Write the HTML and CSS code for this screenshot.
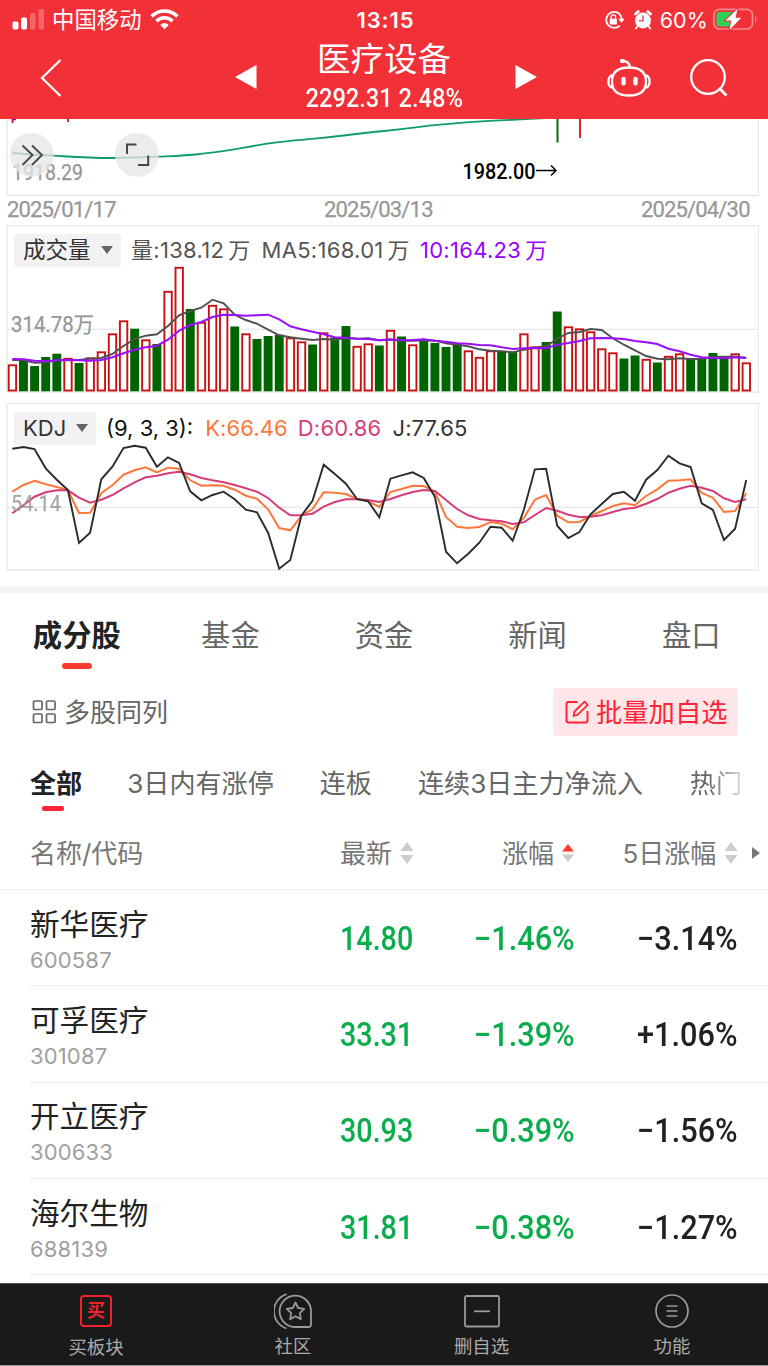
FILE: index.html
```html
<!DOCTYPE html>
<html lang="zh-CN">
<head>
<meta charset="utf-8">
<title>医疗设备</title>
<link rel="stylesheet" href="styles.css">
</head>
<body>
<div class="app">
  <header class="header">
    <div class="status">
      <div class="status-left">
        <svg width="34" height="22" viewBox="0 0 34 22" fill="#fff"><rect x="0.5" y="12.500" width="6" height="8" rx="1.8"/><rect x="9" y="8.500" width="6" height="12" rx="1.8"/><g opacity=".25"><rect x="18" y="4" width="5.5" height="16.500" rx="1.6"/><rect x="26.500" y="0" width="5.500" height="20.500" rx="1.600"/></g></svg>
        <span class="carrier">中国移动</span>
        <svg width="29" height="22" viewBox="0 0 29 22" fill="none" stroke="#fff" stroke-width="3.6"><path d="M1.700 7.400C8.800 .2 20.200 .2 27.300 7.400"/><path d="M6.400 12.100C10.900 7.700 18.100 7.700 22.600 12.100"/><path d="M14.500 20.200L10.200 15.900Q14.500 12.300 18.800 15.900Z" fill="#fff" stroke="none"/></svg>
      </div>
      <div class="clock">13:15</div>
      <div class="status-right">
        <svg class="i-lock" width="20" height="20" viewBox="0 0 20 20"><path d="M15.400 3.800A8 8 0 1 0 15.800 15.600M15.400 3.800Q17.500 6 17.600 9" fill="none" stroke="#fff" stroke-width="1.800"/><path d="M14.400 8.800H20.800L17.400 12.800Z" fill="#fff"/><rect x="5.700" y="8.700" width="7.200" height="5.800" rx="1" fill="#fff"/><path d="M7 9V7.200a2.300 2.300 0 0 1 4.600 0V9" fill="none" stroke="#fff" stroke-width="1.300"/></svg>
        <svg class="i-alarm" width="18" height="20" viewBox="0 0 18 20"><circle cx="9" cy="10.500" r="7.900" fill="#fff"/><path d="M1.500 4L4.300 1.500M16.500 4L13.700 1.500" stroke="#fff" stroke-width="2.800" stroke-linecap="round"/><path d="M3.400 16.200L1.800 18.500M14.600 16.200L16.200 18.500" stroke="#fff" stroke-width="1.800" stroke-linecap="round"/><path d="M9 5.500V10.800H4.800" fill="none" stroke="#f23037" stroke-width="1.300"/></svg>
        <span class="battery-text">60%</span>
        <svg width="46" height="24" viewBox="0 0 46 24"><rect x="1" y="1.400" width="38.500" height="19.600" rx="5.500" fill="none" stroke="#fff" stroke-opacity=".42" stroke-width="1.700"/><path d="M42 7.700Q45 11.200 42 14.700Z" fill="#fff" opacity=".45"/><rect x="3.500" y="3.900" width="18" height="14.600" rx="3" fill="#30d158"/><path d="M24.500 .7L12.500 12.400H18.200L16.600 21.700L28.300 9.700H22.600Z" fill="#fff" stroke="#f23037" stroke-width="2" paint-order="stroke"/></svg>
      </div>
    </div>
    <div class="nav">
      <div class="nav-back"><svg width="22" height="38" viewBox="0 0 22 38" fill="none" stroke="#fff" stroke-width="2.200"><path d="M20.500 1L2 19L20.500 37"/></svg></div>
      <svg class="nav-arrow" width="22" height="24" viewBox="0 0 22 24" fill="#fff"><path d="M0 12L21.500 0V24Z"/></svg>
      <div class="nav-title">
        <div class="nav-name">医疗设备</div>
        <div class="nav-quote"><span class="din">2292.31 2.48%</span></div>
      </div>
      <svg class="nav-arrow" width="22" height="24" viewBox="0 0 22 24" fill="#fff"><path d="M22 12L0.500 0V24Z"/></svg>
      <div class="nav-actions">
        <svg width="44" height="40" viewBox="0 0 44 40" fill="none" stroke="#fff" stroke-width="2.300"><path d="M22 8.500C34 8.500 39 13.500 39 22.500S34 36.500 22 36.500S5 31.500 5 22.500S10 8.500 22 8.500Z"/><path d="M4.500 16.500Q1.400 18 1.400 22.500T4.500 28.500M39.500 16.500Q42.600 18 42.600 22.500T39.500 28.500M22.500 8.500Q23 3 17 2" stroke-linecap="round"/><circle cx="15.300" cy="1.900" r="2.300" fill="#fff" stroke="none"/><path d="M16.500 20V24.200M28.500 20V24.200" stroke-width="4.400" stroke-linecap="round"/></svg>
        <svg width="38" height="38" viewBox="0 0 38 38" fill="none" stroke="#fff" stroke-width="2.300"><circle cx="18" cy="18" r="16.800"/><path d="M29 29L36.500 36.500" stroke-width="2.800"/></svg>
      </div>
    </div>
  </header>

  <section class="charts">
    <div class="price">
      <svg width="753" height="77" viewBox="6 119 753 77">
        <path d="M7 119V195.300H758.500V119" fill="none" stroke="#e6e6e6" stroke-width="1.300"/>
        <path d="M12.500 119V123M68 119V122M580 119V138" stroke="#d01018" stroke-width="1.800"/>
        <path d="M557.500 119V142.500" stroke="#0a6a0a" stroke-width="2"/>
        <path d="M13 119.500H16" stroke="#90f" stroke-width="1.500"/>
        <path d="M12.300 153C26 154 40 155 53.500 155.700S90 158.200 113 158S145 157.400 160 156.700S185 155.700 200 154S222 151.600 233 149.700S255 145.500 267 143.700S295 140.200 317 138.300S350 134.500 384 131S420 126.500 440 124.700S475 121.700 494 120.700S530 119 548 118" fill="none" stroke="#129c6e" stroke-width="1.800"/>
        <text class="axis" x="12" y="180" textLength="71" lengthAdjust="spacingAndGlyphs">1918.29</text>
        <text class="mark" x="462.500" y="178.500" textLength="73" lengthAdjust="spacingAndGlyphs">1982.00</text>
        <path d="M536 170.500H556M551 165.500L556 170.500L551 175.500" fill="none" stroke="#000" stroke-width="1.500"/>
        <circle cx="31.700" cy="154.800" r="22" fill="#e6e6e6" fill-opacity=".76"/>
        <circle cx="137" cy="154.800" r="22" fill="#e6e6e6" fill-opacity=".76"/>
        <path d="M22.500 145.500L32.500 155L22.500 165M32 145.500L42 155L32 165" fill="none" stroke="#484848" stroke-width="1.900"/>
        <path d="M127 154V144.500H136.500M148.200 155.500V165H138" fill="none" stroke="#484848" stroke-width="2"/>
      </svg>
    </div>
    <div class="dates">
      <svg width="744" height="30" viewBox="7 196 744 30">
        <text class="axis" x="7" y="216.600" textLength="109.500">2025/01/17</text>
        <text class="axis" x="324" y="216.600" textLength="109.500">2025/03/13</text>
        <text class="axis" x="641" y="216.600" textLength="109.500">2025/04/30</text>
      </svg>
    </div>
    <div class="panel panel-vol">
      <div class="legend legend-vol">
        <div class="picker picker-vol"><span>成交量</span><i></i></div>
        <span class="lg g1">量:138.12<b>万</b></span><span class="lg g2">MA5:168.01<b>万</b></span><span class="lg g3">10:164.23<b>万</b></span>
      </div>
      <svg id="vol" width="753" height="168" viewBox="6 225 753 168"></svg>
    </div>
    <div class="panel panel-kdj">
      <div class="legend">
        <div class="picker picker-kdj"><span>KDJ</span><i></i></div>
        <span class="lg k0">(9, 3, 3):</span><span class="lg k1">K:66.46</span><span class="lg k2">D:60.86</span><span class="lg k3">J:77.65</span>
      </div>
      <svg id="kdj" width="753" height="168" viewBox="6 403 753 168"></svg>
    </div>
  </section>

  <nav class="tabs">
    <div class="tab active">成分股</div><div class="tab">基金</div><div class="tab">资金</div><div class="tab">新闻</div><div class="tab">盘口</div>
  </nav>

  <div class="tools">
    <div class="multi">
      <svg width="25" height="24" viewBox="0 0 25 24" fill="none" stroke="#666" stroke-width="1.700"><rect x="1.500" y="1" width="8.500" height="8.500" rx="1"/><rect x="14.500" y="1" width="8.500" height="8.500" rx="1"/><rect x="1.500" y="14" width="8.500" height="8.500" rx="1"/><rect x="14.500" y="14" width="8.500" height="8.500" rx="1"/></svg>
      <span>多股同列</span>
    </div>
    <div class="add">
      <svg width="24" height="24" viewBox="0 0 24 24" fill="none" stroke="#ff2436" stroke-width="2"><path d="M12.500 2H3.500Q1.500 2 1.500 4V20.500Q1.500 22.500 3.500 22.500H20.500Q22.500 22.500 22.500 20.500V11"/><path d="M8.500 16L9.500 11.500L19.500 1.700L22.700 4.900L12.800 14.700Z" stroke-width="1.800" stroke-linejoin="round"/></svg>
      <span>批量加自选</span>
    </div>
  </div>

  <div class="filters">
    <span class="filter on">全部</span><span class="filter">3日内有涨停</span><span class="filter">连板</span><span class="filter">连续3日主力净流入</span><span class="filter last">热门</span>
  </div>

  <div class="thead">
    <span class="th-name">名称/代码</span>
    <span class="th c1"><span>最新</span><svg width="14" height="22" viewBox="0 0 14 22" fill="#ccc"><path d="M7 0L13.500 9H.5ZM7 22L13.500 13H.5Z"/></svg></span>
    <span class="th c2"><span>涨幅</span><svg width="12" height="18" viewBox="0 0 12 18" fill="#ccc"><path d="M6 0L12 7.500H0Z" fill="#ff3b30"/><path d="M6 18L12 10.500H0Z"/></svg></span>
    <span class="th c3"><span>5日涨幅</span><svg width="14" height="22" viewBox="0 0 14 22" fill="#ccc"><path d="M7 0L13.500 9H.5ZM7 22L13.500 13H.5Z"/></svg></span>
    <svg class="more" width="8" height="12" viewBox="0 0 8 12" fill="#777"><path d="M0 0L8 6L0 12Z"/></svg>
  </div>

  <div class="list">
    <div class="row"><div class="stock"><div class="name">新华医疗</div><div class="code">600587</div></div><span class="v v1">14.80</span><span class="v v2">−1.46%</span><span class="v v3">−3.14%</span></div>
    <div class="row"><div class="stock"><div class="name">可孚医疗</div><div class="code">301087</div></div><span class="v v1">33.31</span><span class="v v2">−1.39%</span><span class="v v3">+1.06%</span></div>
    <div class="row"><div class="stock"><div class="name">开立医疗</div><div class="code">300633</div></div><span class="v v1">30.93</span><span class="v v2">−0.39%</span><span class="v v3">−1.56%</span></div>
    <div class="row"><div class="stock"><div class="name">海尔生物</div><div class="code">688139</div></div><span class="v v1">31.81</span><span class="v v2">−0.38%</span><span class="v v3">−1.27%</span></div>
  </div>

  <footer class="bottom">
    <div class="item"><div class="buy">买</div><span>买板块</span></div>
    <div class="item item-community"><svg width="38" height="36" viewBox="0 0 38 36" fill="none" stroke="#9a9a9a" stroke-width="1.800"><path d="M37 18.500V31.500Q37 34 34.500 34H22A15.700 15.700 0 1 1 37 18.500Z"/><path d="M12.500 1.200A18 18 0 0 0 12.500 35.500"/><path d="M21.500 9.500L24.200 15L30.200 15.900L25.800 20.100L26.900 26.100L21.500 23.300L16.100 26.100L17.200 20.100L12.800 15.900L18.800 15Z" stroke-linejoin="round"/></svg><span>社区</span></div>
    <div class="item item-remove"><svg width="36" height="36" viewBox="0 0 36 36" fill="none" stroke="#9a9a9a" stroke-width="1.800"><rect x="1" y="3" width="34" height="30.500" rx="1.500"/><path d="M10 18.300H26"/></svg><span>删自选</span></div>
    <div class="item"><svg width="36" height="36" viewBox="0 0 36 36" fill="none" stroke="#9a9a9a" stroke-width="1.700"><circle cx="18" cy="18" r="16"/><path d="M12.500 13H23.500M12.500 18H23.500M12.500 23H23.500"/></svg><span>功能</span></div>
  </footer>
</div>
<script src="charts.js"></script>
</body>
</html>
```

FILE: charts.js
```js
var X0 = 12.3, STEP = 11.12;

// Bar tops; r = rising (hollow), g = falling (solid)
var bars = ("r365 g359 g366 g357 g353.7 r358.500 g363 r358 r352 r334 r321 g328.700 r340 g344 r291.500 r267.500 " +
  "g309 r322.500 r305.500 r309 g326.500 r334 g339 g336 g334.700 r338 r342 g344.500 r333 g337.500 g326 r346.500 " +
  "r344 g345.500 r330.500 g336.500 r345 g340.500 g343 g347 g344 r351 r357.500 r351 g352 g351.500 r334 r347 g342 " +
  "g311.500 r327 r329 r332 r349 r353 g358.500 g355.500 r359.500 g362.500 r356.500 r354 g359 g359 g353 g356.500 r354 r363").split(" ");

var ma5 = [300,300,308,307,301,301,300,296,294,282,258,237,227,223,198,166,153,143,119,130,164,180,191,209,226,232,236,240,237,239,234,236,235,241,239,242,242,241,242,250,254,259,268,272,274,277,269,263,259,236,219,216,207,210,235,254,271,288,296,298,295,297,297,291,290,290,293];
var ma10 = [297,298,302,304,301,299,301,302,300,292,280,269,262,257,239,212,195,186,171,164,165,167,166,164,178,199,208,215,223,232,233,236,237,241,238,241,240,238,242,245,250,251,255,256,262,267,265,264,265,254,249,243,235,234,235,237,243,247,252,266,274,284,292,294,295,292,294];
var J = [146,141,147,205,239,270,429,398,238,200,144,137,143,200,172,189,274,301,285,275,298,329,337,398,506,480,347,302,194,222,251,297,304,352,236,226,217,234,290,455,490,461,428,380,383,422,330,208,206,377,414,396,343,312,282,275,302,239,210,167,190,201,310,330,420,386,240];
var K = [275,255,242,253,261,270,339,338,280,256,224,211,202,217,203,206,241,257,256,257,269,287,296,328,384,391,347,327,277,278,282,297,304,321,276,267,257,258,275,351,380,384,381,366,371,388,354,299,285,347,367,366,348,333,318,310,316,288,268,242,241,238,279,293,336,333,280];
var D = [340,316,290,277,271,271,293,308,299,285,265,247,232,227,220,215,223,234,241,247,255,265,275,294,323,346,346,341,320,306,298,298,300,306,297,286,276,270,273,300,327,346,357,361,364,372,367,345,324,332,344,351,350,346,336,327,323,311,297,278,266,257,263,273,295,306,298];

function line(values, top, color, width) {
  var pts = values.map(function (v, i) {
    return (X0 + i * STEP).toFixed(1) + "," + (top + v / 3).toFixed(1);
  }).join(" ");
  return '<polyline points="' + pts + '" fill="none" stroke="' + color + '" stroke-width="' + width + '"/>';
}

var frame = function (y, mid) {
  return '<path d="M7 ' + y + 'H758.5V' + (y + 166.3) + 'H7ZM7 ' + mid + 'H758.5" fill="none" stroke="#e8e8e8" stroke-width="1.3"/>';
};

var vol = frame(225.700, 329.300) + '<text class="axis" x="11" y="332" textLength="83" lengthAdjust="spacingAndGlyphs">314.78万</text>';
bars.forEach(function (b, i) {
  var y = parseFloat(b.slice(1)), cx = X0 + i * STEP;
  vol += b[0] === "g"
    ? '<rect x="' + (cx - 4.4) + '" y="' + y + '" width="8.9" height="' + (391.3 - y) + '" fill="#006400"/>'
    : '<rect x="' + (cx - 3.6) + '" y="' + (y + 0.3) + '" width="7.4" height="' + (390.2 - y) + '" fill="#fff" stroke="#cb1010" stroke-width="1.9"/>';
});
vol += line(ma5, 260, "#505050", 1.9) + line(ma10, 260, "#9a0dff", 2);
document.getElementById("vol").innerHTML = vol;

document.getElementById("kdj").innerHTML = frame(403.700, 507.300) +
  line(K, 400, "#ff763a", 2) + line(D, 400, "#d63c78", 2) + line(J, 400, "#2b2b2b", 1.9) +
  '<text class="axis" x="11" y="510.500" textLength="50" lengthAdjust="spacingAndGlyphs" opacity=".85">54.14</text>';
```

FILE: styles.css
```css
* { box-sizing: border-box; }
body { margin: 0; background: #fff; font-family: Inter, "Noto Sans CJK SC", sans-serif; color: #222; }
svg { display: block; flex: none; }
.app { width: 768px; height: 1366px; display: flex; flex-direction: column; overflow: hidden; background: #fff; white-space: nowrap; }

.header { height: 119px; flex: none; background: #f23037; color: #fff; }
.status { height: 39px; display: grid; grid-template-columns: 1fr auto 1fr; align-items: center; padding: 0 9px 0 12px; }
.status-left, .status-right { display: flex; align-items: center; }
.status-right { justify-content: flex-end; }
.carrier { font-size: 22.400px; line-height: 34px; margin: 0 8px 0 6px; }
.clock { font-size: 22px; font-weight: 600; letter-spacing: .9px; }
.i-alarm { margin-left: 10px; }
.battery-text { font-size: 21.500px; margin: 0 5px 0 8px; letter-spacing: .1px; }
.nav { height: 80px; display: grid; grid-template-columns: 235px 22px 258px 22px 231px; }
.nav-back { padding: 20px 0 0 40px; }
.nav-arrow { margin-top: 26px; }
.nav-title { text-align: center; padding-right: 4px; }
.nav-name { font-size: 33.500px; line-height: 40px; height: 40px; }
.nav-quote { font-size: 25px; line-height: 38px; height: 38px; }
.din { display: inline-block; font-family: Roboto, sans-serif; font-weight: 500; transform: scaleX(.945); }
.nav-actions { display: flex; gap: 39px; padding: 20px 0 0 70px; }

.charts { padding-left: 6px; }
.axis { font-family: Roboto, "Noto Sans CJK SC", sans-serif; font-size: 22px; fill: #979797; stroke: #979797; stroke-width: .25px; }
.mark { font-family: Roboto, sans-serif; font-size: 22.500px; font-weight: 500; fill: #000; }
.price { height: 77px; }
.dates { height: 29px; padding-left: 1px; }
.panel { display: grid; height: 168px; }
.panel > * { grid-area: 1 / 1; }
.panel-kdj { margin-top: 10px; }
.legend { z-index: 1; display: flex; align-items: center; height: 34px; margin: 8px 0 0 8px; font-size: 22px; }
.legend-vol .lg, .legend-vol .picker span { line-height: 32px; padding-bottom: 1px; }
.picker { display: flex; align-items: center; justify-content: space-between; height: 33px; padding: 0 8px 0 9px; border-radius: 3px; background: #f2f2f2; color: #333; }
.picker i { border: 6px solid transparent; border-top: 8px solid #666; border-bottom: 0; }
.picker-vol { width: 107px; font-size: 22.500px; }
.picker-kdj { width: 82px; }
.legend-vol .lg { letter-spacing: .3px; }
.lg b { font-weight: 400; margin-left: 4px; }
.g1 { margin-left: 10px; color: #555; }
.g2 { margin-left: 11px; color: #555; }
.g3 { margin-left: 10px; color: #90f; }
.k0 { margin-left: 10px; color: #111; }
.k1 { margin-left: 12px; color: #ff763a; letter-spacing: .1px; }
.k2 { margin-left: 10px; color: #d63c78; letter-spacing: .2px; }
.k3 { margin-left: 11px; color: #333; letter-spacing: .1px; }

.tabs { margin-top: 15px; height: 88px; flex: none; border-top: 7px solid #f4f4f4; display: grid; grid-template-columns: repeat(5, 1fr); }
.tab { display: flex; flex-direction: column; align-items: center; font-size: 29.300px; line-height: 44px; padding-top: 21px; color: #666; }
.tab.active { font-weight: 700; color: #222; }
.tab.active::after { content: ""; width: 30px; height: 6px; border-radius: 3px; margin-top: 5px; background: #ff3b30; }

.tools { display: flex; justify-content: space-between; align-items: center; height: 76px; flex: none; padding: 0 30px 0 32px; }
.multi { display: flex; align-items: center; gap: 7px; font-size: 26px; color: #666; }
.add { display: flex; align-items: center; width: 185px; height: 48px; padding-left: 12px; gap: 7px; font-size: 26.300px; color: #ff2436; background: #ffe7e9; border-radius: 3px; }
.multi span, .add span { line-height: 40px; padding-top: 1px; }

.filters { display: flex; height: 72px; flex: none; padding: 14px 0 0 30px; font-size: 26.100px; line-height: 40px; color: #666; margin-bottom: -3px; }
.filter { margin-right: 46px; }
.filter.on { font-weight: 700; color: #222; display: flex; flex-direction: column; align-items: center; margin-right: 45px; }
.filter.on::after { content: ""; width: 22px; height: 5px; border-radius: 2px; margin-top: 2px; background: #ff2436; transform: translateX(-3px); }
.last { color: transparent; background: linear-gradient(90deg, #666 35%, #ddd); -webkit-background-clip: text; background-clip: text; margin: 0 0 0 1px; height: 40px; }

.thead { display: grid; grid-template-columns: 310px 162px 120.500px 129.500px auto; align-items: center; height: 71px; flex: none; padding: 0 0 2px 30px; font-size: 26px; color: #777; border-bottom: 1px solid #eee; }
.th { display: flex; align-items: center; gap: 8px; }
.th-name, .th span { line-height: 40px; padding-top: 1px; }

.list { flex: 1; min-height: 0; padding-left: 30px; overflow: hidden; }
.row { height: 96.330px; display: grid; grid-template-columns: 310px 134px 162.500px auto; align-items: center; border-bottom: 1px solid #eee; }
.stock { padding-top: 5px; }
.name { font-size: 29.600px; line-height: 38px; color: #222; }
.code { font-size: 22px; line-height: 31px; padding-top: 2px; letter-spacing: .15px; color: #a0a0a0; }
.v { font-family: Roboto, sans-serif; font-size: 33px; font-weight: 500; justify-self: start; transform-origin: left; color: #0aad4c; transform: scaleX(.93); padding-top: 1px; }
.v1 { transform: scaleX(.87); }
.v3 { color: #222; }

.bottom { height: 83px; flex: none; display: grid; grid-template-columns: repeat(4, 1fr); background: #1a1a1a; border-top: 1px solid #555; border-bottom: 1px solid #999; color: #aaa; }
.item { display: flex; flex-direction: column; align-items: center; padding-top: 9px; font-size: 18.400px; line-height: 28px; }
.item > svg { margin-bottom: 3px; }
.item-community { padding-left: 10px; }
.item-remove { padding-left: 3px; }
.buy { width: 32px; height: 32px; margin: 2px 0 6px; border: 2px solid #f0232c; border-radius: 4px; font-size: 18px; line-height: 27px; text-align: center; font-weight: 700; color: #f0232c; }
```
